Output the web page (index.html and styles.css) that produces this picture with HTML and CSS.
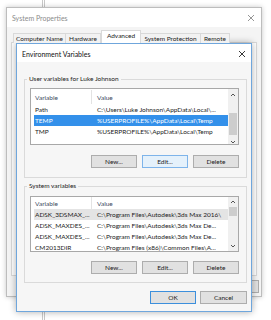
FILE: index.html
```html
<!DOCTYPE html>
<html>
<head>
<meta charset="utf-8">
<link rel="stylesheet" href="styles.css">
</head>
<body>
<div class="sysprop">
  <div class="sp-title">
    <span>System Properties</span>
    <svg class="x" width="8" height="8" viewBox="0 0 8 8"><path d="M1 1L7 7M7 1L1 7" stroke="#8a8a8a" stroke-width="0.9" fill="none"/></svg>
  </div>
  <div class="tabs">
    <span class="tab t-cn">Computer Name</span>
    <span class="tab t-hw">Hardware</span>
    <span class="tab sel t-adv">Advanced</span>
    <span class="tab t-sp">System Protection</span>
    <span class="tab t-rm">Remote</span>
  </div>
  <div class="sp-panel"></div>
  <div class="sp-footer">
    <button class="btn">OK</button>
    <button class="btn">Cancel</button>
    <button class="btn">Apply</button>
  </div>
</div>

<div class="env">
  <div class="env-title">
    <span>Environment Variables</span>
    <svg class="x" width="8" height="8" viewBox="0 0 8 8"><path d="M1 1L7 7M7 1L1 7" stroke="#222" stroke-width="0.9" fill="none"/></svg>
  </div>
  <div class="env-body">
    <fieldset class="grp g1">
      <legend>User variables for Luke Johnson</legend>
      <div class="list l1">
        <div class="lv">
          <div class="lv-head"><span class="c1">Variable</span><span class="c2">Value</span></div>
          <div class="row"><span class="c1">Path</span><span class="c2">C:\Users\Luke Johnson\AppData\Local\...</span></div>
          <div class="row selected"><span class="c1">TEMP</span><span class="c2">%USERPROFILE%\AppData\Local\Temp</span></div>
          <div class="row"><span class="c1">TMP</span><span class="c2">%USERPROFILE%\AppData\Local\Temp</span></div>
        </div>
        <div class="sb sb1">
          <svg class="arr" width="10" height="11" viewBox="0 0 10 11"><path d="M3 7L5 5L7 7" stroke="#555" stroke-width="1" fill="none"/></svg>
          <div class="thumb"></div>
          <div class="fill"></div>
          <svg class="arr" width="10" height="10" viewBox="0 0 10 10"><path d="M3 6L5 8L7 6" stroke="#555" stroke-width="1" fill="none"/></svg>
        </div>
      </div>
      <div class="btns">
        <button class="btn">New...</button>
        <button class="btn focus">Edit...</button>
        <button class="btn">Delete</button>
      </div>
    </fieldset>

    <fieldset class="grp g2">
      <legend>System variables</legend>
      <div class="list l2">
        <div class="lv">
          <div class="lv-head"><span class="c1">Variable</span><span class="c2">Value</span></div>
          <div class="row soft"><span class="c1">ADSK_3DSMAX_...</span><span class="c2">C:\Program Files\Autodesk\3ds Max 2016\</span></div>
          <div class="row"><span class="c1">ADSK_MAXDES_...</span><span class="c2">C:\Program Files\Autodesk\3ds Max De...</span></div>
          <div class="row"><span class="c1">ADSK_MAXDES_...</span><span class="c2">C:\Program Files\Autodesk\3ds Max De...</span></div>
          <div class="row"><span class="c1">CM2013DIR</span><span class="c2">C:\Program Files (x86)\Common Files\A...</span></div>
        </div>
        <div class="sb sb2">
          <svg class="arr" width="10" height="10" viewBox="0 0 10 10"><path d="M3 6L5 4L7 6" stroke="#555" stroke-width="1" fill="none"/></svg>
          <div class="thumb"></div>
          <div class="fill"></div>
          <svg class="arr" width="10" height="10" viewBox="0 0 10 10"><path d="M3 4L5 6L7 4" stroke="#555" stroke-width="1" fill="none"/></svg>
        </div>
      </div>
      <div class="btns">
        <button class="btn">New...</button>
        <button class="btn">Edit...</button>
        <button class="btn">Delete</button>
      </div>
    </fieldset>

    <div class="footer">
      <button class="btn ok">OK</button>
      <button class="btn cancel">Cancel</button>
    </div>
  </div>
</div>
</body>
</html>
```

FILE: styles.css
```css
* { box-sizing: border-box; }
html, body { margin: 0; padding: 0; }
body {
  width: 271px;
  height: 320px;
  overflow: hidden;
  position: relative;
  font-family: Lato, "Noto Sans", sans-serif;
  font-size: 6.5px;
  color: #1c1c1c;
  background-color: #fff;
  background-image: linear-gradient(to right,
    transparent 42px, #c8c8c8 42px, #c8c8c8 43px, transparent 43px,
    transparent 44px, #c8c8c8 44px, #c8c8c8 45px, transparent 45px);
}

/* ---------- System Properties (background window) ---------- */
.sysprop {
  position: absolute;
  left: 6px;
  top: 7px;
  width: 256px;
  height: 290px;
  background: #f4f4f4;
  border: 1px solid #bdbdbd;
  box-shadow: 0 0 5px rgba(0,0,0,0.22);
}
.sp-title {
  height: 19px;
  background: #fff;
  display: flex;
  align-items: center;
  justify-content: space-between;
  padding: 0 6px 0 5px;
  color: #8c8c8c;
  font-size: 7px;
}
.tabs {
  display: flex;
  align-items: flex-end;
  height: 16px;
  padding-left: 6px;
  position: relative;
  z-index: 1;
}
.tab {
  height: 10px;
  line-height: 9px;
  text-align: center;
  border: 1px solid #d9d9d9;
  border-bottom: none;
  margin-right: -1px;
  background: #f2f2f2;
  color: #222;
  white-space: nowrap;
}
.t-cn { width: 53px; }
.t-hw { width: 36px; }
.t-adv { width: 40px; }
.t-sp { width: 61px; }
.t-rm { width: 30px; }
.tab.sel {
  height: 13px;
  line-height: 10px;
  background: #fff;
  margin: 0 -1px 0 1px;
}
.sp-panel {
  margin: -1px 4px 0 4px;
  height: 234px;
  background: #fff;
  border: 1px solid #d9d9d9;
}
.sp-footer {
  display: flex;
  justify-content: flex-end;
  gap: 5px;
  margin-top: 4px;
  padding-right: 2px;
}

/* ---------- Environment Variables dialog ---------- */
.env {
  position: absolute;
  left: 16px;
  top: 43px;
  width: 236px;
  height: 269px;
  border: 1px solid #6fa6dc;
  background: #f6f6f6;
  box-shadow: 0 0 7px rgba(0,0,0,0.33);
  display: flex;
  flex-direction: column;
}
.env-title {
  height: 18px;
  flex: none;
  background: #fff;
  display: flex;
  align-items: center;
  justify-content: space-between;
  padding: 1px 5px 0 5px;
  color: #111;
  font-size: 7px;
}
.env-body {
  padding: 13px 4px 0 7px;
  display: flex;
  flex-direction: column;
}

.grp {
  margin: 0;
  border: 1px solid #dadada;
  padding: 5px 7px 9px 5px;
  min-width: 0;
  display: flex;
  flex-direction: column;
}
.grp legend {
  padding: 0 2px;
  margin-left: -3px;
  line-height: 8px;
  height: 8px;
  color: #222;
}
.g1 { height: 103px; }
.g2 { height: 101px; margin-top: 4px; padding-top: 6px; }

.list {
  display: flex;
  background: #fff;
  border: 1px solid #a8a8a8;
  flex: none;
}
.l1 { height: 57px; }
.l2 { height: 56px; }
.lv { flex: 1; min-width: 0; }
.lv-head, .row {
  display: grid;
  grid-template-columns: 58px 1fr;
  margin-left: 3px;
  white-space: nowrap;
}
.lv-head { color: #3c4b5e; align-items: center; }
.l1 .lv-head { height: 15px; padding-top: 1px; }
.l2 .lv-head { height: 12px; }
.lv-head .c1 { border-right: 1px solid #e3e3e3; align-self: stretch; display: flex; align-items: center; }
.row { height: 11px; line-height: 11px; }
.c1 { padding-left: 1px; overflow: hidden; }
.c2 { padding-left: 5px; overflow: hidden; }
.row.selected { background: #3390ea; color: #fff; }
.row.soft { background: #e4e4e4; }

.sb {
  width: 10px;
  flex: none;
  background: #f0f0f0;
  display: flex;
  flex-direction: column;
}
.sb .arr { display: block; flex: none; }
.sb .fill { flex: 1; }
.thumb { background: #cdcdcd; margin: 0 1px; flex: none; }
.sb1 .thumb { margin-top: 13px; height: 22px; }
.sb2 .thumb { height: 9px; }

.btns {
  display: flex;
  justify-content: flex-end;
  gap: 5px;
  margin-top: 10px;
}
.g2 .btns { margin-top: 9px; }
.btn {
  font: inherit;
  color: #1c1c1c;
  width: 46px;
  height: 13px;
  padding: 0;
  margin: 0;
  background: #e1e1e1;
  border: 1px solid #adadad;
  line-height: 11px;
}
.btn.focus { background: #e5f1fb; border-color: #7eb4ea; }

.footer {
  display: flex;
  justify-content: flex-end;
  gap: 4px;
  margin-top: 8px;
}
.footer .btn { height: 13px; }
.btn.ok { border: 1px solid #3c8fdc; }
.btn.cancel { width: 47px; }
```
